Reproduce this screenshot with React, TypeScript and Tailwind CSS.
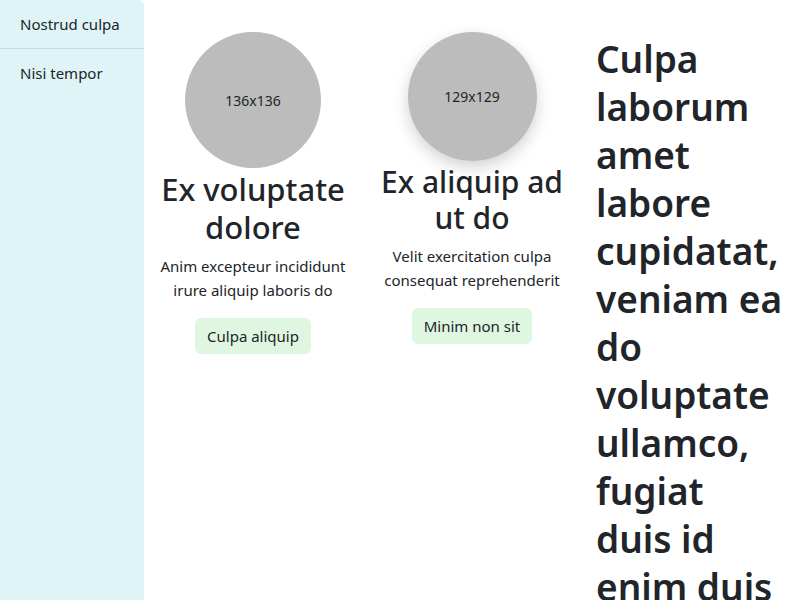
import React from 'react';

// 卡片数据
interface Card {
  size: number;
  title: string;
  text: string;
  action: string;
  shadow?: boolean;
  titleClass: string;
}

const cards: Card[] = [
  {
    size: 136,
    title: 'Ex voluptate dolore',
    text: 'Anim excepteur incididunt irure aliquip laboris do',
    action: 'Culpa aliquip',
    titleClass: 'text-[31px] leading-[38px] mt-[2px]',
  },
  {
    size: 129,
    title: 'Ex aliquip ad ut do',
    text: 'Velit exercitation culpa consequat reprehenderit',
    action: 'Minim non sit',
    shadow: true,
    titleClass: 'text-[30px] leading-[36px] mt-[3px]',
  },
];

const navItems = ['Nostrud culpa', 'Nisi tempor'];

const App: React.FC = () => {
  return (
    <div
      className="flex h-[600px] w-[800px] overflow-hidden bg-white text-[#212529]"
      style={{ fontFamily: '"Noto Sans", "Open Sans", sans-serif' }}
    >
      {/* 侧边栏 */}
      <aside className="w-[144px] shrink-0 bg-[#dff4f7] rounded-tr-md">
        {navItems.map((item, i) => (
          <div
            key={item}
            className={`px-5 py-3 text-[15px] leading-6 ${i === 0 ? 'border-b border-[#c5dde2]' : ''}`}
          >
            {item}
          </div>
        ))}
      </aside>

      {/* 主内容 */}
      <main className="grid flex-1 grid-cols-[186px_186px_186px] gap-x-[33px] pl-4">
        {cards.map((card) => (
          <div key={card.title} className="flex flex-col items-center pt-8 text-center">
            <div
              className={`flex items-center justify-center rounded-full bg-[#bcbcbc] text-[14px] ${card.shadow ? 'shadow-[0_6px_16px_rgba(0,0,0,0.18)]' : ''}`}
              style={{ width: card.size, height: card.size }}
            >
              {card.size}x{card.size}
            </div>
            <h2 className={`font-medium ${card.titleClass} mb-2`}>{card.title}</h2>
            <p className="mb-4 text-[15px] leading-6">{card.text}</p>
            <button className="rounded-md bg-[#dff7e0] px-3 py-[6px] text-[15px] leading-6">
              {card.action}
            </button>
          </div>
        ))}
        <h1 className="-ml-[2px] pt-[35px] text-[37px] font-semibold leading-[48px]">
          Culpa laborum amet labore cupidatat, veniam ea do voluptate ullamco, fugiat duis id enim duis
        </h1>
      </main>
    </div>
  );
};

export default App;
